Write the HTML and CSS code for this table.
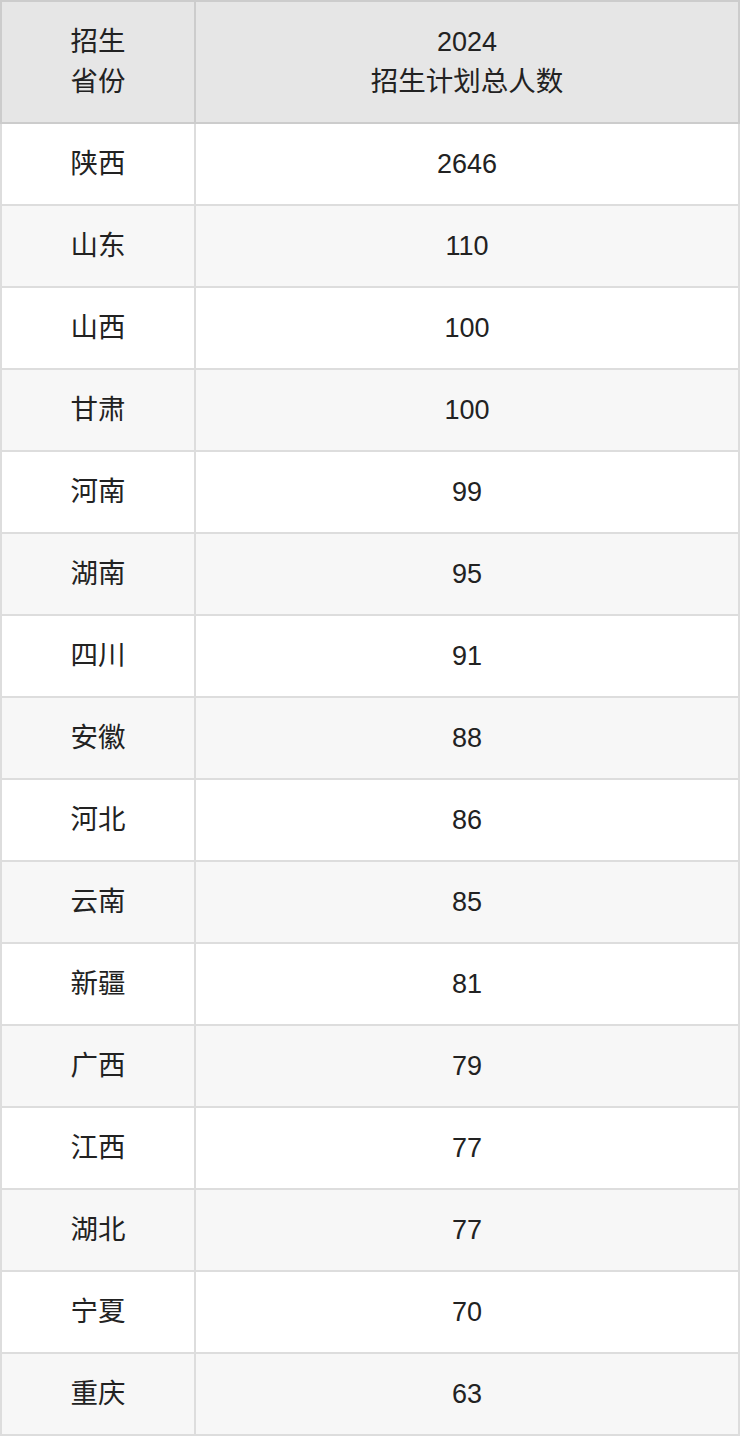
FILE: index.html
```html
<!DOCTYPE html>
<html lang="zh">
<head>
<meta charset="utf-8">
<link rel="stylesheet" href="styles.css">
</head>
<body>
<table class="plan">
  <thead>
    <tr><th class="c1">招生<br>省份</th><th class="c2"><span class="num">2024</span><br>招生计划总人数</th></tr>
  </thead>
  <tbody>
    <tr><td>陕西</td><td class="num">2646</td></tr>
    <tr><td>山东</td><td class="num">110</td></tr>
    <tr><td>山西</td><td class="num">100</td></tr>
    <tr><td>甘肃</td><td class="num">100</td></tr>
    <tr><td>河南</td><td class="num">99</td></tr>
    <tr><td>湖南</td><td class="num">95</td></tr>
    <tr><td>四川</td><td class="num">91</td></tr>
    <tr><td>安徽</td><td class="num">88</td></tr>
    <tr><td>河北</td><td class="num">86</td></tr>
    <tr><td>云南</td><td class="num">85</td></tr>
    <tr><td>新疆</td><td class="num">81</td></tr>
    <tr><td>广西</td><td class="num">79</td></tr>
    <tr><td>江西</td><td class="num">77</td></tr>
    <tr><td>湖北</td><td class="num">77</td></tr>
    <tr><td>宁夏</td><td class="num">70</td></tr>
    <tr><td>重庆</td><td class="num">63</td></tr>
  </tbody>
</table>
</body>
</html>
```
FILE: styles.css
```css
html, body {
  margin: 0;
  padding: 0;
  background: #fff;
}
.plan {
  width: 740px;
  border-collapse: collapse;
  table-layout: fixed;
  font-family: "Liberation Sans", "Noto Sans CJK SC", sans-serif;
  font-size: 27.5px;
  color: #222;
}
.plan th, .plan td {
  text-align: center;
  vertical-align: middle;
  padding: 0;
  font-weight: normal;
}
.plan th {
  background: #e6e6e6;
  border: 2px solid #cccccc;
  height: 120px;
  line-height: 40px;
}
.plan .c1 { width: 192px; }
.plan td {
  border: 2px solid #dddddd;
  height: 80px;
  line-height: 30px;
}
.plan .num {
  font-size: 27px;
}
.plan tbody tr:nth-child(even) td {
  background: #f7f7f7;
}
```
